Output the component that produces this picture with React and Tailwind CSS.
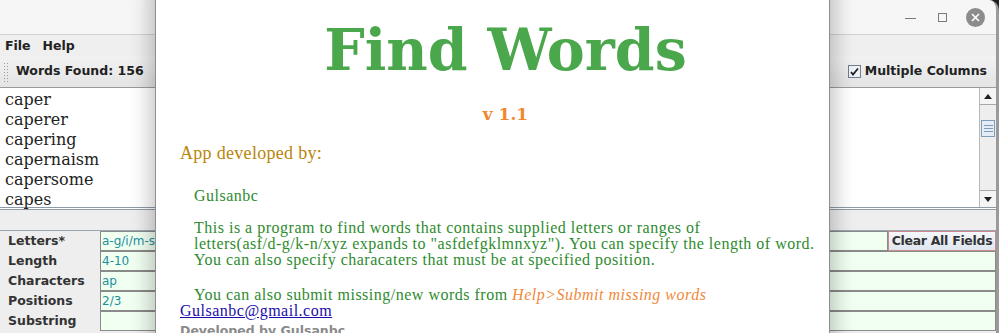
const words = ["caper", "caperer", "capering", "capernaism", "capersome", "capes"];

const fields = [
  { label: "Letters*", value: "a-g/i/m-s" },
  { label: "Length", value: "4-10" },
  { label: "Characters", value: "ap" },
  { label: "Positions", value: "2/3" },
  { label: "Substring", value: "" },
];

function TitleBar() {
  return (
    <div className="h-[35px] flex items-center justify-end bg-[#f6f6f6] border-b border-[#d2d2d2] pr-[11px]">
      <div className="w-[11px] h-[1px] bg-[#7a7a7a] mr-[22px] mt-[3px]" />
      <div className="w-[9px] h-[9px] border border-[#7a7a7a] mr-[19px]" />
      {/* close circle */}
      <div className="w-[19px] h-[19px] rounded-full bg-[#8c8c8c] flex items-center justify-center">
        <svg width="9" height="9" viewBox="0 0 9 9">
          <path d="M1 1L8 8M8 1L1 8" stroke="#fff" strokeWidth="1.6" />
        </svg>
      </div>
    </div>
  );
}

function Scrollbar() {
  return (
    <div className="w-[17px] flex flex-col border-l border-[#b8b8b8] bg-[#eeeeee]">
      <div className="h-[17px] flex items-center justify-center border-b border-[#a8a8a8] bg-[#f4f4f4]">
        <svg width="8" height="5" viewBox="0 0 8 5"><path d="M0 5L4 0L8 5Z" fill="#222" /></svg>
      </div>
      <div className="h-[15px]" />
      <div className="h-[17px] mx-[1px] border border-[#7f9db9] bg-[#e4ecf6] flex flex-col items-center justify-center gap-[2px]">
        <div className="w-[9px] h-[1px] bg-[#7f9db9]" />
        <div className="w-[9px] h-[1px] bg-[#7f9db9]" />
        <div className="w-[9px] h-[1px] bg-[#7f9db9]" />
      </div>
      <div className="flex-1" />
      <div className="h-[17px] flex items-center justify-center border-t border-[#a8a8a8] bg-[#f4f4f4]">
        <svg width="8" height="5" viewBox="0 0 8 5"><path d="M0 0L8 0L4 5Z" fill="#222" /></svg>
      </div>
    </div>
  );
}

function AboutDialog() {
  return (
    <div className="absolute left-[155px] top-[-10px] w-[675px] h-[360px] bg-white border-x border-[#8e8e8e] shadow-[0_0_18px_6px_rgba(0,0,0,0.22)] font-['Liberation_Serif',serif]">
      <div className="pl-[26px] text-center text-[#4ba74b] font-bold text-[57px] leading-none mt-[31px] font-['DejaVu_Serif',serif]">
        Find Words
      </div>
      <div className="pl-[26px] text-center text-[#f0892b] font-bold text-[17px] mt-[24px] font-['DejaVu_Serif',serif]">
        v 1.1
      </div>
      <div className="pl-[24px] mt-[12px] text-[18px] tracking-[0.3px] text-[#b8860b]">App developed by:</div>
      <div className="pl-[38px] mt-[21px] text-[16px] tracking-[0.5px] leading-[16px] text-[#2e8b2e]">Gulsanbc</div>
      <div className="pl-[38px] mt-[16px] text-[16px] tracking-[0.5px] leading-[16px] text-[#2e8b2e] whitespace-nowrap">
        This is a program to find words that contains supplied letters or ranges of
        <br />
        letters(asf/d-g/k-n/xyz expands to "asfdefgklmnxyz"). You can specify the length of word.
        <br />
        You can also specify characaters that must be at specified position.
      </div>
      <div className="pl-[38px] mt-[19px] text-[16px] tracking-[0.5px] leading-[16px] text-[#2e8b2e] whitespace-nowrap">
        You can also submit missing/new words from{" "}
        <span className="italic text-[#f0893a]">Help&gt;Submit missing words</span>
      </div>
      <div className="pl-[24px] text-[16px] tracking-[0.5px] leading-[16px]">
        <span className="text-[#1a0dab] underline">Gulsanbc@gmail.com</span>
      </div>
      <div className="pl-[24px] mt-[3px] text-[12.5px] font-bold text-[#8a8a8a] font-['DejaVu_Sans',sans-serif]">
        Developed by Gulsanbc
      </div>
    </div>
  );
}

export default function App() {
  return (
    <div className="w-[999px] h-[333px] bg-[#1e1e1e] overflow-hidden relative">
      <div className="w-full h-full bg-[#eeeeee] rounded-tr-[10px] overflow-hidden flex flex-col font-['DejaVu_Sans',sans-serif] border-r-[3px] border-[#9a9a9a]">
        <TitleBar />

        {/* menu bar */}
        <div className="h-[21px] flex items-center gap-[12px] pl-[5px] pt-[1px] text-[12.5px] font-bold text-[#222] bg-[#efefef]">
          <span>File</span>
          <span>Help</span>
        </div>

        {/* toolbar */}
        <div className="h-[32px] flex items-center bg-gradient-to-b from-[#f2f2f2] to-[#e4e4e4] border-b border-[#9a9a9a]">
          <div className="w-[7px] h-[20px] ml-[3px] mr-[6px] bg-[radial-gradient(#9a9a9a_0.7px,transparent_0.8px)] bg-[length:3px_3px]" />
          <span className="text-[12.5px] font-bold text-[#222]">Words Found: 156</span>
          <div className="flex-1" />
          <div className="flex items-center gap-[4px] mr-[9px]">
            <div className="w-[13px] h-[13px] border border-[#6f7f90] bg-[#eef2f8] flex items-center justify-center">
              <svg width="9" height="9" viewBox="0 0 9 9"><path d="M1 5L3 7.5L8 1.5" stroke="#222" strokeWidth="1.8" fill="none" /></svg>
            </div>
            <span className="text-[12.5px] font-bold text-[#222]">Multiple Columns</span>
          </div>
        </div>

        {/* word list */}
        <div className="h-[122px] flex bg-white border-b-[3px] border-double border-[#8e9aa8]">
          <div className="flex-1 pl-[5px] pt-[2px] font-['DejaVu_Serif',serif] text-[16px] leading-[20px] text-[#222]">
            {words.map((w) => (
              <div key={w}>{w}</div>
            ))}
          </div>
          <Scrollbar />
        </div>

        <div className="h-[21px] bg-[#eeeeee] border-b border-[#9aa6b4]" />

        {/* search fields */}
        <div className="flex flex-col">
          {fields.map((f, i) => (
            <div key={f.label} className="h-[20px] flex items-stretch">
              <div className="w-[100px] pl-[8px] text-[12.5px] font-bold text-[#333] flex items-center">{f.label}</div>
              <div className="flex-1 border border-[#8a8a8a] bg-[#f1fff1] text-[12px] text-[#1e8fa0] pl-[1px] flex items-center">
                {f.value}
              </div>
              {i === 0 && (
                <div className="w-[108px] border border-[#c88a8a] bg-gradient-to-b from-[#f4f7fb] to-[#dfe6ef] text-[12.5px] tracking-[-0.3px] font-bold text-[#333] flex items-center justify-center whitespace-nowrap overflow-hidden">
                  Clear All Fields
                </div>
              )}
            </div>
          ))}
        </div>
      </div>

      <AboutDialog />
    </div>
  );
}
